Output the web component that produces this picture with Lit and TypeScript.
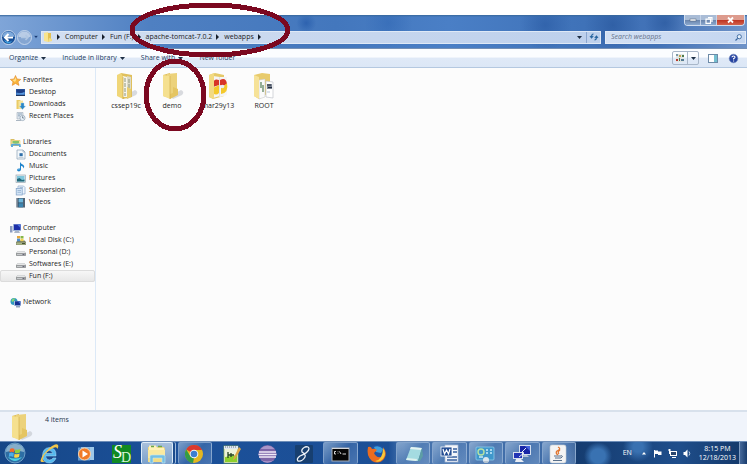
import { LitElement, html, css, svg, TemplateResult } from "lit";
import { customElement } from "lit/decorators.js";
import { classMap } from "lit/directives/class-map.js";

type Art = TemplateResult;

const icon = (w: number, h: number, art: Art): Art =>
  html`<svg width=${w} height=${h} viewBox="0 0 ${w} ${h}" aria-hidden="true">${art}</svg>`;

const disk = svg`<path d="M1 6 L3 4 H9 L11 6 V8 Q11 9 10 9 H2 Q1 9 1 8 Z" fill="#a9abad"/><path d="M1.5 6 L3 4.3 H9 L10.5 6 Z" fill="#e6e7e8"/><path d="M1.5 6.5 H10.5 V8.3 H1.5 Z" fill="#d2d4d6" stroke="#77797b" stroke-width=".5"/><rect x="7.5" y="7" width="2" height="1" fill="#667"/>`;
const screen = svg`<path d="M3 1 H11 V8 H3 Z" fill="#9fb4d8"/><path d="M4 1.5 H10.5 V7 H4 Z" fill="#1c2fa8"/><path d="M7 1.5 H10.5 V5 Z" fill="#4d74dd"/><path d="M5 8 H9 L10 10 H4 Z" fill="#aab6c8"/><path d="M0 3 H2.5 V9.5 H0 Z" fill="#8c9cc0"/>`;

const small: Record<string, Art> = {
  star: svg`<path d="M5.5 .5 L7 4 L10.8 4.4 L8 6.8 L9 10.4 L5.5 8.5 L2.2 10.4 L3 6.8 L.3 4.4 L4 4 Z" fill="#f9b43c" stroke="#e08423" stroke-width=".6"/><path d="M5.5 2 L6.3 4.8 L5 7 L2.5 5 L4.6 4.6 Z" fill="#ffe08a"/>`,
  desktop: svg`<rect x="1" y="2" width="9" height="7" fill="#2f5fa8"/><path d="M1.5 2.5 H9.5 V5 Q5 7 1.5 5 Z" fill="#1d3e86"/><path d="M1.5 6 Q6 7 9.5 5 V7.5 H1.5Z" fill="#5b9be0"/><rect x="1" y="8" width="9" height="1" fill="#20355e"/>`,
  downloads: svg`<path d="M1.5 1 H5 L6 2 V10 H1.5 Z" fill="#eacb66"/><path d="M3.5 2 L8 1.5 V10 H3.5 Z" fill="#f6e49b"/><path d="M6 4 H9 V7 H10.5 L7.5 10.5 L4.5 7 H6 Z" fill="#2c86c5" stroke="#9cd0ee" stroke-width=".4"/>`,
  recent: svg`<path d="M2 1.5 H8 V8 H2 Z" fill="#dfe6ee" stroke="#9dabb9" stroke-width=".6"/><path d="M3 3 H7 M3 4.8 H5" stroke="#6f8ea8" stroke-width=".7"/><circle cx="7.5" cy="7" r="2.6" fill="#e9f1f8" stroke="#8d9fb0" stroke-width=".7"/><path d="M7.5 5.3 V7 H9" stroke="#456" stroke-width=".6" fill="none"/><path d="M1 9.5 H6" stroke="#aab6c2"/>`,
  libraries: svg`<path d="M.5 2 H4 L5 3 H10 V9 H.5 Z" fill="#d9bd62"/><path d="M1.5 3.5 H10.5 V8 H1.5 Z" fill="#f4e5a2"/><path d="M2.5 4 H9 V6 Q6 7.5 2.5 6 Z" fill="#86c46c"/><path d="M1 8 Q1 6.5 3 6.8 H9 Q11 6.5 10.8 8.5 V10 H9 V8.5 H3 V10 H1 Z" fill="#58a9dc"/>`,
  documents: svg`<path d="M2 1 H8 L10 3 V10 H2 Z" fill="#f4f8fb" stroke="#8ba0b4" stroke-width=".7"/><path d="M8 1 V3 H10" fill="none" stroke="#8ba0b4" stroke-width=".6"/><rect x="4.5" y="4.2" width="3.2" height="3" fill="#2f6fa9"/><path d="M3.5 8.5 H8.5" stroke="#a5b6c4" stroke-width=".6"/>`,
  music: svg`<path d="M5 1 Q6 3 8.5 4 Q10 5.5 8.5 7.5 Q8.7 5.5 6 4.7 V8.5 Q6 10.3 4 10.4 Q2 10.3 2 8.9 Q2.3 7.4 5 7.6 Z" fill="#1f84cc"/><path d="M2.8 8.8 Q3.4 8 4.6 8.4" stroke="#8fd0f5" stroke-width=".6" fill="none"/>`,
  pictures: svg`<rect x="1" y="2" width="9.5" height="7.5" fill="#e9f0f3" stroke="#8d9aa5" stroke-width=".6"/><rect x="2" y="3" width="7.5" height="5.5" fill="#7fc6dc"/><path d="M2 8.5 V6 L4.5 5 L7 7 L9.5 6.5 V8.5 Z" fill="#21687a"/>`,
  subversion: svg`<path d="M3 1 H8.5 L10 2.5 V9 H3 Z" fill="#eef5fc" stroke="#86a7cc" stroke-width=".7"/><rect x="1.2" y="3.5" width="6" height="6.5" fill="#d4e5f6" stroke="#7e9fc6" stroke-width=".7"/><path d="M2.5 5.5 H6 M2.5 7.3 H6 M4.5 2.5 H8" stroke="#789ac0" stroke-width=".6"/>`,
  videos: svg`<rect x="1.5" y="1" width="8.5" height="9.5" fill="#34475a"/><rect x="3.5" y="1.5" width="4.5" height="4" fill="#6fb8dd"/><rect x="3.5" y="6.2" width="4.5" height="4" fill="#3d85b0"/><path d="M2.5 1.5 V10.5 M9 1.5 V10.5" stroke="#c9d6df" stroke-width=".8" stroke-dasharray="1 1"/>`,
  computer: screen,
  system: svg`<path d="M1 7 L3 5.5 H9.5 L11 7 V10 H1 Z" fill="#757a61"/><path d="M1.3 7.5 H10.7 V9.7 H1.3 Z" fill="#a9b584"/><rect x="2" y="1" width="3" height="2.5" fill="#e5a63a"/><rect x="5.5" y="1" width="3" height="2.5" fill="#85b647"/><rect x="2" y="3.7" width="3" height="2.5" fill="#4d8fd0"/><rect x="5.5" y="3.7" width="3" height="2.5" fill="#f0d251"/><path d="M7 8.5 H10" stroke="#455036"/>`,
  disk,
  network: svg`<circle cx="4" cy="4.5" r="3.5" fill="#2f9ac2"/><path d="M1.5 3 Q3 1 5 1.3 L4 4 L2 5 Z" fill="#8ad672"/><path d="M4 4 H11 V9 H4 Z" fill="#a8bedf"/><path d="M5 4.3 H10.3 V8.2 H5 Z" fill="#15308f"/><path d="M8 4.5 H10.3 V7 Z" fill="#4474dc"/><path d="M6 9 H10 V10.5 H6 Z" fill="#90a3be"/>`,
};

const shadow = svg`<path d="M9 24 L20 18 Q24 20 21 23 L12 27 Z" fill="#c0c3c9" opacity=".6"/>`;
const folders: Record<string, Art> = {
  docs: svg`${shadow}<path d="M6 1 L17 3 V25 L8 27 Z" fill="#e0c05c"/><path d="M8 4 L12 5 V25 H8 Z" fill="#f6f4ea"/><path d="M12 4 L16 5 V25 H12 Z" fill="#dcdac8"/><path d="M10 6 V24 M14 7 V24" stroke="#8e967d" stroke-width="1" stroke-dasharray="4 1"/><path d="M2 3 L6 1 L8 5 V27 L2 24 Z" fill="#f0d678"/><path d="M12 15 L16 17 V25 L12 27 Z" fill="#e9cd6e"/><path d="M8 5 V27" stroke="#c9a541" stroke-width=".7"/>`,
  plain: svg`${shadow}<path d="M2 3 L9 1 L9 26 L2 24 Z" fill="#dfbf5c"/><path d="M6 2 L16 1 V22 L9 26 L6 24 Z" fill="#ecd27b"/><path d="M2 3 L9 4 V27 L2 24 Z" fill="#f5e08f"/><path d="M12 15 L17 17 V23 L9 27 V22 L12 21 Z" fill="#e5c562"/><path d="M9 4 V27" stroke="#d4b04c" stroke-width=".7"/>`,
  chrome: svg`<path d="M2 3 L8 1 L17 3 V24 L6 27 L2 25 Z" fill="#e5c969"/><path d="M6 4 L13 5 V24 L6 26 Z M13 5 H20 V23 L13 25 Z" fill="#f5f5f5"/><path d="M6 11 Q7 6 12 8 V13 L6 15 Z M13 8 Q19 5 20 12 L16 14 L13 13 Z" fill="#d73527"/><path d="M6 16 L12 13 V21 Q9 24 6 21 Z M14 16 L18 13 L20 11 Q22 21 14 22 Z" fill="#f4c92c"/><circle cx="15.500" cy="14.500" r="1.800" fill="#e8edf5"/><path d="M12.500 5 V25" stroke="#e4e4e4"/><path d="M2 3 L7 1 V27 L2 25 Z" fill="#f2da82"/>`,
  pages: svg`<path d="M1 3 L9 1 L17 2 V20 L6 27 L1 24 Z" fill="#e8cb6c"/><path d="M6 8 L12 7 V25 L6 27 Z" fill="#fafafa" stroke="#c2c2c2" stroke-width=".5"/><path d="M8 10 V16 M10 13 V20" stroke="#537c55" stroke-width="1.2"/><path d="M13 9 L20 10 V26 L13 25 Z" fill="#fff" stroke="#b9bcc5" stroke-width=".6"/><path d="M14 12 H19 V17 H14 Z" fill="#7c8491"/><path d="M14 13 H18 M15 15.5 H19" stroke="#263042"/><path d="M14 20 H17" stroke="#b7c5db"/><path d="M1 3 L6 5 V27 L1 24 Z" fill="#f6e298"/>`,
};

interface Task { name: string; open?: boolean; art: Art }
const tasks: Task[] = [
  { name: "Internet Explorer", art: svg`<path d="M17 13 H6.5 Q7 17 10.5 17 Q13 17 14 15 H17 Q15 20 10.5 20 Q4 20 3.5 13 Q3.5 5 10.5 4.5 Q17.5 5 17 13 Z M7 10.5 H13.7 Q13 7.5 10.3 7.5 Q7.5 7.5 7 10.5 Z" fill="#54b9ee" stroke="#b5e3fa" stroke-width=".5"/><path d="M4 19 Q-1 20 4 12 Q10 4 16 1.5 Q21 .5 18.5 6 Q18 3.3 14 5 Q6 9 4 15 Q3 18 6 18.5 Z" fill="#f2c64a"/>` },
  { name: "Media Player", art: svg`<rect x="6" y="4" width="13" height="13" fill="#9dc8e9"/><rect x="3" y="4.5" width="12" height="13" fill="#78aee0" opacity=".8"/><circle cx="9.5" cy="11" r="6" fill="#f07b28" stroke="#fad2a7" stroke-width="1"/><path d="M7.5 7.5 L13 11 L7.5 14.5 Z" fill="#fff"/>` },
  { name: "SD", art: svg`<rect x="1" y="2" width="19" height="18" fill="#118a22"/><text x="2" y="15" class="sd-s">S</text><text x="10" y="19" class="sd-d">D</text>` },
  { name: "Explorer", open: true, art: svg`<path d="M2 4 H18 L19 6 V19 H2 Z" fill="#f3dc82"/><path d="M3 2.5 H10 L11 5 H18 V8 H3 Z" fill="#fff3b8"/><path d="M5 3.5 H8 M12 3.5 H16" stroke="#6ca748" stroke-width="1.5"/><path d="M2 7 H19 V15 H2 Z" fill="#fae99f"/><path d="M4 20 V13 Q4 12 6 12 H17 Q19 12 19 13 V20 H16 V15 H7 V20 Z" fill="#75bfe2" stroke="#c4e9f7" stroke-width=".6"/>` },
  { name: "Chrome", open: true, art: svg`<circle cx="10" cy="11" r="9" fill="#e4b721"/><path d="M10 11 L2.2 6.5 A9 9 0 0 1 18 7 H10 Z" fill="#dc392d"/><path d="M2.2 6.5 L6.5 13.5 L10 15 L9 20 A9 9 0 0 1 2.2 6.5 Z" fill="#329c45"/><circle cx="10" cy="11" r="4.3" fill="#f4f5f7"/><circle cx="10" cy="11" r="3.3" fill="#3d7ed1"/>` },
  { name: "Notepad++", art: svg`<rect x="3" y="3" width="14" height="17" fill="#edf2da" stroke="#8bb04c" stroke-width=".7"/><path d="M3 3 H17 V6 H3 Z" fill="#dfe7ef"/><path d="M4 4 H16" stroke="#6f7a81" stroke-dasharray="1 1"/><path d="M4 14 L16 12 V19 H4 Z" fill="#8ecf2b"/><path d="M7 9 V15 M7 12 H9 M10 10 V14 M8 12 H13" stroke="#25431f" stroke-width="1.3"/><path d="M18 4 L20 6 L14 16 L12 17 L13 14 Z" fill="#dfa544"/>` },
  { name: "Eclipse", art: svg`<circle cx="10.500" cy="11" r="9" fill="#7d65a8"/><path d="M3.500 6 A9 9 0 0 1 17.500 6 Z" fill="#a996c9"/><path d="M2 9 H19 M1.500 11.500 H19.500 M2 14 H19" stroke="#efeaf7" stroke-width="1.300"/><path d="M4 17 Q10 20 17 17 Q10 22 4 17Z" fill="#b9a8d6"/>` },
  { name: "Script editor", art: svg`<rect x="2" y="2" width="18" height="18" rx="1" fill="#173f70"/><path d="M16 6 Q16 3 12 4 Q8 6 9 9 Q13 11 12 14 Q9 19 5 18 Q3 16 7 13 Q15 10 16 6" fill="none" stroke="#eef3f9" stroke-width="1.300"/>` },
  { name: "Command Prompt", open: true, art: svg`<rect x="2" y="5" width="17" height="13" fill="#060606" stroke="#a6abb3"/><path d="M2 5.500 H19" stroke="#d4d7dc"/><path d="M6 8.500 H4.500 V11 H6 M8 8.500 V9.200 M8 10.500 V11 M9.500 8.500 L11 11 M12.500 11 H16" stroke="#eee" stroke-width=".9" fill="none"/>` },
  { name: "Firefox", art: svg`<circle cx="11" cy="10.500" r="8.500" fill="#1d55a5"/><path d="M8 4 Q13 2 17 6 L15 10 L10 9 Z" fill="#3e9ddb"/><path d="M2 4 Q5 3 6 6 Q9 5 11 7 L8 10 Q10 15 15 14 Q19 10 17 4 Q22 10 18 16 Q13 22 6 18 Q0 13 2 4 Z" fill="#ea6c1f"/><path d="M17 5 Q21 11 17 16 Q13 20 9 18 Q17 17 17 5 Z" fill="#f9c837"/>` },
  { name: "Notepad", open: true, art: svg`<path d="M8 4 L19 5 L15 18 L3 17 Z" fill="#a4dbe1"/><path d="M8 4 L19 5 L18 7 L7 6 Z" fill="#e5f3f2"/><path d="M15 18 L19 5 L20 13 L17 18 Z" fill="#5d9ea5"/><path d="M4 15 L14 16 L13.500 18 L3 17 Z" fill="#dff2ef"/>` },
  { name: "Word", open: true, art: svg`<rect x="6" y="2" width="13" height="17" fill="#f2f5fa" stroke="#a5b7d2" stroke-width=".7"/><path d="M14 6 H18 M14 9 H18 M8 14 H18 M8 17 H18" stroke="#365f9f" stroke-width="1.300"/><rect x="2" y="4" width="11" height="9" fill="#264f94" stroke="#fff" stroke-width=".8"/><path d="M4 6 L5.500 11 L7.500 7 L9.500 11 L11 6" fill="none" stroke="#fff" stroke-width="1.200"/>` },
  { name: "Control Panel", open: true, art: svg`<rect x="1" y="4" width="18" height="13" rx="1" fill="#3f97cb" stroke="#91cdeb" stroke-width=".8"/><circle cx="6" cy="9" r="3" fill="none" stroke="#b7e2a2" stroke-width="1.400"/><path d="M11 7 H13 M15 7 H17 M11 10 H13 M15 10 H17 M4 14 H8" stroke="#c9ecfa" stroke-width="1.500"/><circle cx="11" cy="17" r="3" fill="#dce6ef"/><path d="M9 19 H13" stroke="#a9b8c6" stroke-width="1.500"/>` },
  { name: "Remote session", open: true, art: svg`<rect x="7" y="2" width="12" height="10" fill="#d3deee"/><rect x="8" y="3" width="10" height="8" fill="#1725a6"/><path d="M13 3 H18 V8 Z" fill="#4463dc"/><path d="M12 12 H15 L17 14 H9 Z" fill="#b5c1d5"/><rect x="1" y="9" width="10" height="7" fill="#d9e1ee"/><rect x="2" y="10" width="8" height="5" fill="#2335b5"/><path d="M4 16 H9 L12 19 H3 Z" fill="#e9edf3"/><path d="M14 5 L10 9 L12 10 L7 14" stroke="#e8edf6" fill="none"/>` },
  { name: "Java", open: true, art: svg`<rect x="2" y="2" width="16" height="18" rx="2" fill="#f4f4f4" stroke="#c8ccd2" stroke-width=".6"/><path d="M10 4 Q14 6 9 8 Q7 10 10 12 M12 7 Q9 9 11 11" stroke="#e2762f" stroke-width="1.300" fill="none"/><path d="M6 13 H13 M7 15 H13 M5 17.500 H14 M13 12.500 Q16 13 13 15" stroke="#58708c" stroke-width="1" fill="none"/>` },
];

const nav = [
  { title: "Favorites", icon: "star", items: [["Desktop", "desktop"], ["Downloads", "downloads"], ["Recent Places", "recent"]] },
  { title: "Libraries", icon: "libraries", items: [["Documents", "documents"], ["Music", "music"], ["Pictures", "pictures"], ["Subversion", "subversion"], ["Videos", "videos"]] },
  { title: "Computer", icon: "computer", items: [["Local Disk (C:)", "system"], ["Personal (D:)", "disk"], ["Softwares (E:)", "disk"], ["Fun (F:)", "disk"]] },
  { title: "Network", icon: "network", items: [] },
];
const files = [["cssep19c", "docs"], ["demo", "plain"], ["mar29y13", "chrome"], ["ROOT", "pages"]];
const path = ["Computer", "Fun (F:)", "apache-tomcat-7.0.2", "webapps"];

@customElement("app-root")
export class AppRoot extends LitElement {
  static styles = css`
    :host { display: block; position: relative; font: 7px/12px "Open Sans", "Noto Sans", sans-serif; color: #1c1c1c; }
    * { box-sizing: border-box; }
    button, input { font: inherit; color: inherit; margin: 0; padding: 0; border: 0; background: none; }
    button { display: flex; align-items: center; justify-content: center; }
    a { color: inherit; text-decoration: none; }
    svg { display: block; flex: none; overflow: visible; }
    .screen { min-height: 100vh; display: flex; flex-direction: column; background: #fff; padding: 15px 1px 3px 0; }
    .frame {
      background:
        linear-gradient(#38689c, transparent 2px),
        radial-gradient(circle at 41% 8px, #2258a8aa 0, transparent 10px),
        radial-gradient(circle at 52% 8px, #2f66b388 0, transparent 24px),
        radial-gradient(circle at 73% 10px, #2a5ba4aa 0, transparent 26px),
        radial-gradient(circle at 82% 10px, #28579daa 0, transparent 28px),
        radial-gradient(circle at 89% 8px, #28579daa 0, transparent 20px),
        linear-gradient(90deg, #7fa5d8 0, #4f80c2 20%, #4377bd 45%, #4a7fc6 60%, #3f72b8 78%, #4272b7 88%, #6f93c8 100%);
      height: 34px; border-bottom: 1px solid #7590b5;
    }
    .caption { height: 16px; display: flex; justify-content: flex-end; align-items: flex-start; padding-right: 2px; }
    .controls { display: flex; height: 11px; border: 1px solid #d0ddef; border-top: 0; border-radius: 0 0 4px 4px; overflow: hidden; }
    .controls button { width: 16px; background: linear-gradient(#a9bcd6 45%, #6883ab 50%, #8ca9cf); border-right: 1px solid #c5d3e8; }
    .controls .close { width: 27px; border: 0; background: linear-gradient(#dd9b8d 45%, #bd3220 50%, #d4634c); }
    .address { display: flex; align-items: center; height: 12px; padding-right: 1px; }
    .travel { display: flex; align-items: center; width: 41px; padding-left: 1px; gap: 1px; flex: none; }
    .bar { flex: 1; display: flex; height: 13px; border: 1px solid #dfe9f6; background: linear-gradient(90deg, #d2dff2, #c6d6ee 60%, #bdd0ec); }
    .crumbs { flex: 1; display: flex; align-items: center; gap: 4px; padding-left: 1px; }
    .crumbs svg { margin-right: 1px; }
    .bar button { width: 14px; }
    .bar .refresh { border-left: 1px solid #8ba6cf; }
    .search { display: flex; align-items: center; width: 141px; height: 13px; margin-left: 4px; padding: 0 3px 0 5px; border: 1px solid #e1eaf6; background: linear-gradient(90deg, #d2e0f4, #c4d6f0); }
    .search input { flex: 1; min-width: 0; height: 11px; font-style: italic; outline: 0; }
    .search input::placeholder { color: #66738a; opacity: 1; }
    .tools { height: 19px; display: flex; align-items: center; padding: 0 9px; color: #24405f; background: linear-gradient(#fbfdff 45%, #dfe9f7 50%, #dce7f6); border-bottom: 1px solid #b4c8e0; }
    .tools button { gap: 3px; margin-right: 16px; }
    .tools .fill { flex: 1; }
    .tools .views { height: 14px; margin: 0 9px 0 0; gap: 0; border: 1px solid #a9b7c9; border-radius: 2px; }
    .views span { display: flex; align-items: center; justify-content: center; width: 10px; height: 12px; }
    .views .kind { width: 15px; border-right: 1px solid #a9b7c9; }
    .tools .pane { margin: 0 11px 0 0; }
    .tools .help { margin: 0; }
    .body { flex: 1; display: flex; background: #fcfcfc; }
    nav { width: 96px; flex: none; padding: 6px 0; border-right: 1px solid #dce9f7; }
    .group { margin-bottom: 14px; }
    .row { display: flex; align-items: center; gap: 2px; height: 12px; padding-left: 10px; }
    .child { padding-left: 15px; gap: 3px; }
    .selected { background: linear-gradient(#f8f8f8, #e6e6e6); outline: 1px solid #dcdcdc; outline-offset: -1px; border-radius: 2px; }
    .files { flex: 1; display: grid; grid-template-columns: repeat(auto-fill, 46px); grid-auto-rows: 42px; padding: 4px 7px; align-content: start; }
    .file { display: flex; flex-direction: column; align-items: center; justify-content: flex-start; }
    .details { display: flex; height: 31px; padding: 1px 10px 0; gap: 13px; background: #f0f4fb; border-top: 2px solid #d8e1ec; color: #27374d; line-height: 14px; }
    .taskbar { display: flex; align-items: stretch; height: 23px; color: #fff; border-top: 1px solid #6c8db8; background: linear-gradient(90deg, #164787, #1b5099 22%, #1c4f96 52%, #4774ae 54%, #3d6aa6 76%, #153c70 78%); }
    .start { width: 30px; flex: none; margin-right: 2px; }
    .apps { width: 544px; display: grid; grid-template-columns: repeat(15, minmax(0, 1fr)); column-gap: 2px; }
    .open { background: linear-gradient(135deg, #a9c3e0aa, #6a92c455 50%, #a4c1e455); border: 1px solid #9db8d9aa; border-bottom: 0; border-radius: 2px; }
    .current { background: linear-gradient(#dce9f5bb, #aac9e6aa); border-color: #dcebf8; margin-right: 3px; box-shadow: 2px 0 #1b4b8c, 3px 0 #9fbbdd; }
    .tray { flex: 1; display: flex; align-items: center; justify-content: flex-end; background: radial-gradient(circle at 22px 14px, #3972b2 0 7px, transparent 14px), radial-gradient(circle at 62px 5px, #3971b1 0 5px, transparent 15px), linear-gradient(90deg, #153c70, #1f4e8b 60%, #133768); }
    .tray svg { margin-right: 6px; }
    .tray .lang { margin-right: 9px; }
    .clock { text-align: center; line-height: 9px; margin: 0 3px 0 2px; }
    .peek { width: 8px; align-self: stretch; border-left: 1px solid #7f9cc2; background: linear-gradient(90deg, #46699a, #183c6d); }
    .sd-s { font: italic 18px "Liberation Serif", serif; fill: #fff; }
    .sd-d { font: 14px "Liberation Serif", serif; fill: #d7f5d7; }
    .marks { position: absolute; left: 0; top: 0; pointer-events: none; }
  `;

  private arrow() {
    return icon(3, 6, svg`<path d="M0 0 L3 3 L0 6 Z" fill="#18202c"/>`);
  }

  private down() {
    return icon(5, 3, svg`<path d="M0 0 H5 L2.5 3 Z" fill="#1e2f45"/>`);
  }

  render() {
    return html`
      <div class="screen">
        <header class="frame">
          <div class="caption">
            <div class="controls">
              <button aria-label="Minimize">${icon(8, 4, svg`<rect x="1" y="1" width="6" height="2" fill="#fff" stroke="#4b5c76" stroke-width=".5"/>`)}</button>
              <button aria-label="Restore">${icon(8, 7, svg`<path d="M3 .7 H7 V5 M1 2.200 H5.500 V6.300 H1 Z" fill="none" stroke="#fff" stroke-width="1.200"/>`)}</button>
              <button class="close" aria-label="Close">${icon(7, 6, svg`<path d="M1 .5 L6 5.500 M6 .5 L1 5.500" stroke="#fff" stroke-width="1.800"/>`)}</button>
            </div>
          </div>
          <div class="address">
            <div class="travel">
              <button aria-label="Back">${icon(15, 15, svg`<circle cx="7.500" cy="7.500" r="7" fill="#174e97" stroke="#dce8f5" stroke-width=".9"/><path d="M1.500 7 Q2 1.500 7.500 1.500 Q13 2 13.500 7 Q8 5 1.500 7 Z" fill="#7da9dc"/><path d="M7 12 Q11 12 12 9 Q10 13.500 7 13.500 Q4 13 3 10 Z" fill="#3fa6e4"/><path d="M12 7.500 H4 M7.500 4 L4 7.500 L7.500 11" fill="none" stroke="#fff" stroke-width="2"/>`)}</button>
              <button aria-label="Forward">${icon(15, 15, svg`<circle cx="7.500" cy="7.500" r="7" fill="#85a6d2" stroke="#d3e0f0" stroke-width=".8"/><path d="M1.500 7 Q2 1.500 7.500 1.500 Q13 2 13.500 7 Z" fill="#b9cce6"/><path d="M4 7.500 H11 M8.500 5 L11 7.500 L8.500 10" fill="none" stroke="#b0c6e2" stroke-width="1.500"/>`)}</button>
              <button aria-label="Recent pages">${icon(6, 4, svg`<path d="M.5 .5 H5.500 L3 3.500 Z" fill="#1b3b76" stroke="#7ba8dc" stroke-width=".6"/>`)}</button>
            </div>
            <div class="bar">
              <div class="crumbs">
                ${icon(9, 10, svg`<path d="M1 1 L5 0 V10 L1 9 Z" fill="#f8e48f"/><path d="M5 1 H8 V8 L5 10 Z" fill="#e2c153"/><path d="M6 6 L9 7 V9 L5 10 Z" fill="#f4dd87"/>`)}
                ${this.arrow()}
                ${path.map((p) => html`<a href="#">${p}</a>${this.arrow()}`)}
              </div>
              <button aria-label="Previous locations">${this.down()}</button>
              <button class="refresh" aria-label="Refresh">${icon(8, 8, svg`<path d="M3.500 1 Q1.500 1 1.500 4 M0 3 L1.500 5 L3.300 3 M4.500 7 Q6.500 7 6.500 4 M4.700 5 L6.500 3 L8 5" fill="none" stroke="#26649e" stroke-width="1.100"/>`)}</button>
            </div>
            <label class="search">
              <input type="text" aria-label="Search webapps" placeholder="Search webapps" />
              ${icon(7, 7, svg`<circle cx="4.300" cy="2.700" r="2.100" fill="#e5effa" stroke="#38659c" stroke-width=".9"/><path d="M2.700 4.300 L.5 6.500" stroke="#38659c" stroke-width="1.200"/>`)}
            </label>
          </div>
        </header>

        <div class="tools">
          <button>Organize ${this.down()}</button>
          <button>Include in library ${this.down()}</button>
          <button>Share with ${this.down()}</button>
          <button>New folder</button>
          <span class="fill"></span>
          <button class="views" aria-label="Change your view">
            <span class="kind">${icon(8, 8, svg`<rect width="8" height="8" fill="#dfe5e2"/><path d="M0 0 H2 V2 H0Z" fill="#7d99a6"/><path d="M5 5 H8 V7 H5Z" fill="#547a93"/><path d="M3 1 H5 V3 H3Z" fill="#c4a04f"/><path d="M0 5 H2 V7 H0Z" fill="#b9382e"/><path d="M3 4 H4 V7 H3Z M6 1 H8 V3 H6Z" fill="#4d7a4a"/>`)}</span>
            <span>${this.down()}</span>
          </button>
          <button class="pane" aria-label="Preview pane">${icon(10, 9, svg`<rect x=".5" y=".5" width="9" height="8" fill="#fff" stroke="#6d8ba8"/><rect x="6" y="1" width="3" height="7" fill="#74bfd0"/>`)}</button>
          <button class="help" aria-label="Help">${icon(9, 9, svg`<circle cx="4.500" cy="4.500" r="4.300" fill="#2744a0" stroke="#7088bd" stroke-width=".6"/><path d="M3 3.300 Q3 2 4.500 2 Q6 2 6 3.300 Q6 4.200 4.600 4.600 V5.600 M4.600 6.400 V7.400" fill="none" stroke="#fff" stroke-width="1.100"/>`)}</button>
        </div>

        <main class="body">
          <nav>
            ${nav.map((g) => html`<div class="group">
              <a class="row" href="#">${icon(11, 11, small[g.icon])}${g.title}</a>
              ${g.items.map(([label, art]) => html`<a href="#" class=${classMap({ row: true, child: true, selected: label === "Fun (F:)" })}>${icon(11, 11, small[art])}${label}</a>`)}
            </div>`)}
          </nav>
          <section class="files">
            ${files.map(([label, art]) => html`<button class="file">${icon(22, 28, folders[art])}<span>${label}</span></button>`)}
          </section>
        </main>

        <footer class="details">${icon(22, 28, folders.plain)}<span>4 items</span></footer>

        <div class="taskbar">
          <button class="start" aria-label="Start">${icon(20, 20, svg`<circle cx="10" cy="10" r="10" fill="#2d6ea4" stroke="#8fbbdb" stroke-width=".7"/><path d="M1 9 Q1 1 10 .7 Q19 1 19 9 Q10 6 1 9 Z" fill="#86aecb"/><path d="M3 14 Q10 22 17 14 Q10 17 3 14 Z" fill="#4ed0e4"/><path d="M5 6 Q7 4.500 9.500 6 L9 9.500 Q7 8 4.500 9.300 Z" fill="#f0692c"/><path d="M10.300 6.300 Q13 7.500 15.500 6 L14.800 9.600 Q12 11 9.800 9.800 Z" fill="#90cf3e"/><path d="M4.300 10 Q6.500 9 8.800 10.300 L8.300 14 Q6 12.500 3.800 13.700 Z" fill="#4caeea"/><path d="M9.600 10.700 Q12 12 14.600 10.500 L14 14 Q11.500 15.500 9 14.300 Z" fill="#fbd442"/>`)}</button>
          <div class="apps">
            ${tasks.map((t) => html`<button aria-label=${t.name} class=${classMap({ open: !!t.open, current: t.name === "Explorer" })}>${icon(21, 21, t.art)}</button>`)}
          </div>
          <div class="tray">
            <span class="lang">EN</span>
            ${icon(6, 4, svg`<path d="M1 3.500 L3 1 L5 3.500 Z" fill="#fff"/>`)}
            ${icon(9, 9, svg`<path d="M1.500 1 V8.500" stroke="#fff"/><path d="M2 1.500 H5 V2.500 H8.500 V6 H5 V5 H2 Z" fill="#fff"/>`)}
            ${icon(9, 9, svg`<rect x="2.500" y="2.500" width="6" height="4" fill="#29466f" stroke="#fff"/><path d="M0 1 H3 M1.500 0 V5 M4 8.500 H8" stroke="#fff"/>`)}
            ${icon(8, 9, svg`<path d="M.5 3 H2 L4.500 .5 V8.500 L2 6 H.5 Z" fill="#fff"/><path d="M6 2.500 Q7.500 4.500 6 6.500" fill="none" stroke="#c8d7e9"/>`)}
            <time class="clock">8:15 PM<br />12/18/2013</time>
            <button class="peek" aria-label="Show desktop"></button>
          </div>
        </div>
      </div>
      <svg class="marks" width="300" height="140" viewBox="0 0 300 140" fill="none" stroke="#7b0820" stroke-width="5" shape-rendering="crispEdges" aria-hidden="true">
        <ellipse cx="210" cy="30" rx="78" ry="25" />
        <ellipse cx="175" cy="95" rx="29" ry="34" />
      </svg>
    `;
  }
}
